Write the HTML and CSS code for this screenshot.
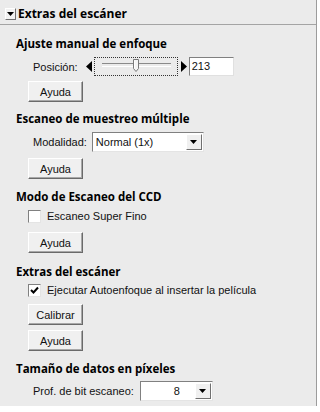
FILE: index.html
```html
<!DOCTYPE html>
<html lang="es">
<head>
<meta charset="utf-8">
<link rel="stylesheet" href="styles.css">
</head>
<body>
<div class="panel">
  <div class="header">
    <span class="toggle"><svg width="7" height="4" viewBox="0 0 7 4"><path d="M0 0H7L3.5 4Z" fill="#000"/></svg></span>
    <span class="header-title">Extras del escáner</span>
  </div>

  <div class="section s1">
    <div class="heading">Ajuste manual de enfoque</div>
    <div class="row r1">
      <span class="label">Posición:</span>
      <svg class="arrow" width="6" height="11" viewBox="0 0 6 11"><path d="M6 0V11L0 5.5Z" fill="#000"/></svg>
      <span class="slider">
        <span class="track"></span>
        <svg class="thumb" width="6" height="13" viewBox="0 0 6 13"><path d="M0.5 0.5H5.5V9.5L3 12.5L0.5 9.5Z" fill="#f4f4f4" stroke="#7a7a7a"/><path d="M1.5 1.5V9" stroke="#fff"/></svg>
      </span>
      <svg class="arrow" width="6" height="11" viewBox="0 0 6 11"><path d="M0 0V11L6 5.5Z" fill="#000"/></svg>
      <span class="input">213</span>
    </div>
    <button class="btn b1">Ayuda</button>
  </div>

  <div class="section s2">
    <div class="heading">Escaneo de muestreo múltiple</div>
    <div class="row r2">
      <span class="label">Modalidad:</span>
      <span class="select sel-mode"><span class="sel-text">Normal (1x)</span><span class="sel-btn"><svg width="7" height="4" viewBox="0 0 7 4"><path d="M0 0H7L3.5 4Z" fill="#000"/></svg></span></span>
    </div>
    <button class="btn b2">Ayuda</button>
  </div>

  <div class="section s3">
    <div class="heading">Modo de Escaneo del CCD</div>
    <label class="check c3"><span class="box"></span><span>Escaneo Super Fino</span></label>
    <button class="btn b3">Ayuda</button>
  </div>

  <div class="section s4">
    <div class="heading">Extras del escáner</div>
    <label class="check c4"><span class="box"><svg width="9" height="9" viewBox="0 0 9 9"><path d="M1 4L3.5 6.5L8 1.5" fill="none" stroke="#000" stroke-width="2"/></svg></span><span>Ejecutar Autoenfoque al insertar la película</span></label>
    <button class="btn b4a">Calibrar</button>
    <button class="btn b4b">Ayuda</button>
  </div>

  <div class="section s5">
    <div class="heading">Tamaño de datos en píxeles</div>
    <div class="row r5">
      <span class="label">Prof. de bit escaneo:</span>
      <span class="select sel-bit"><span class="sel-text num">8</span><span class="sel-btn"><svg width="7" height="4" viewBox="0 0 7 4"><path d="M0 0H7L3.5 4Z" fill="#000"/></svg></span></span>
    </div>
  </div>
</div>
</body>
</html>
```

FILE: styles.css
```css
html, body {
  margin: 0;
  padding: 0;
  background: #ffffff;
}
body {
  width: 320px;
  height: 412px;
  overflow: hidden;
  font-family: "Liberation Sans", Arial, sans-serif;
  font-size: 11px;
  color: #111;
}
.panel {
  width: 316px;
  height: 406px;
  background: #ebebeb;
  border-right: 1px solid #9c9c9c;
  box-sizing: content-box;
}
.header {
  height: 25px;
  box-sizing: border-box;
  border-bottom: 1px solid #a4a4a4;
  display: flex;
  align-items: center;
  padding-left: 5px;
  padding-top: 3px;
  background: #ebebeb;
}
.toggle {
  width: 11px;
  height: 12px;
  box-sizing: border-box;
  background: #f2f2f2;
  border-top: 1px solid #fff;
  border-left: 1px solid #fff;
  border-right: 1px solid #707070;
  border-bottom: 1px solid #707070;
  display: flex;
  align-items: center;
  justify-content: center;
  margin-right: 2px;
}
.header-title {
  font-family: "Open Sans", sans-serif;
  font-weight: bold;
  font-size: 12px;
  color: #000;
}
.section {
  padding-left: 16px;
  display: flex;
  flex-direction: column;
  align-items: flex-start;
}
.heading {
  height: 16px;
  line-height: 16px;
  font-family: "Open Sans", sans-serif;
  font-weight: bold;
  font-size: 11.5px;
  color: #000;
  white-space: nowrap;
}
.s1 { margin-top: 11px; }
.s2 { margin-top: 9px; }
.s3 { margin-top: 10px; }
.s4 { margin-top: 11px; }
.s5 { margin-top: 10px; }

.row {
  display: flex;
  align-items: center;
  margin-left: 17px;
}
.label { white-space: nowrap; }
.r1 { margin-top: 4px; height: 21px; }
.r1 .label { margin-right: 8px; }
.arrow { flex: none; }
.slider {
  width: 84px;
  height: 19px;
  box-sizing: border-box;
  border: 1px dotted #333;
  margin: 0 3px 0 2px;
  display: flex;
  align-items: flex-start;
  position: relative;
}
.track {
  position: absolute;
  left: 7px;
  right: 6px;
  top: 5px;
  height: 2px;
  border-top: 1px solid #8a8a8a;
  border-bottom: 1px solid #fff;
}
.thumb {
  position: absolute;
  left: 38px;
  top: 1px;
}
.input {
  width: 45px;
  height: 19px;
  box-sizing: border-box;
  background: #fff;
  border-top: 1px solid #808080;
  border-left: 1px solid #808080;
  border-right: 1px solid #e0e0e0;
  border-bottom: 1px solid #e0e0e0;
  margin-left: 2px;
  padding-left: 2px;
  line-height: 17px;
}

.r2 { margin-top: 4px; height: 21px; }
.r2 .label { margin-right: 5px; }
.select {
  height: 20px;
  box-sizing: border-box;
  background: #fff;
  border-top: 1px solid #808080;
  border-left: 1px solid #808080;
  border-right: 1px solid #e4e4e4;
  border-bottom: 1px solid #e4e4e4;
  display: flex;
  align-items: center;
  padding: 1px;
}
.sel-mode { width: 112px; }
.sel-bit { width: 73px; }
.sel-text {
  flex: 1;
  padding-left: 2px;
  white-space: nowrap;
}
.sel-text.num {
  text-align: right;
  padding-right: 15px;
}
.sel-btn {
  width: 16px;
  height: 16px;
  box-sizing: border-box;
  background: #f0f0f0;
  border-top: 1px solid #fff;
  border-left: 1px solid #fff;
  border-right: 1px solid #707070;
  border-bottom: 1px solid #707070;
  display: flex;
  align-items: center;
  justify-content: center;
}

.btn {
  margin-left: 12px;
  width: 55px;
  height: 21px;
  box-sizing: border-box;
  padding: 0;
  background: #f0f0f0;
  border-top: 1px solid #fff;
  border-left: 1px solid #fff;
  border-right: 1px solid #6a6a6a;
  border-bottom: 1px solid #6a6a6a;
  box-shadow: inset -1px -1px 0 #a8a8a8;
  font-family: "Liberation Sans", Arial, sans-serif;
  font-size: 11px;
  color: #111;
  border-radius: 0;
}
.b1 { margin-top: 4px; }
.b2 { margin-top: 6px; }
.b3 { margin-top: 8px; }
.b4a { margin-top: 6px; }
.b4b { margin-top: 5px; }

.check {
  display: flex;
  align-items: center;
  margin-left: 12px;
  height: 16px;
  white-space: nowrap;
}
.c3 { margin-top: 3px; }
.c4 { margin-top: 2px; }
.box {
  width: 13px;
  height: 13px;
  box-sizing: border-box;
  background: #fff;
  border-top: 1px solid #808080;
  border-left: 1px solid #808080;
  border-right: 1px solid #e4e4e4;
  border-bottom: 1px solid #e4e4e4;
  margin-right: 6px;
  display: flex;
  align-items: center;
  justify-content: center;
}
.r5 { margin-top: 4px; height: 20px; }
.r5 .label { margin-right: 6px; }
```
